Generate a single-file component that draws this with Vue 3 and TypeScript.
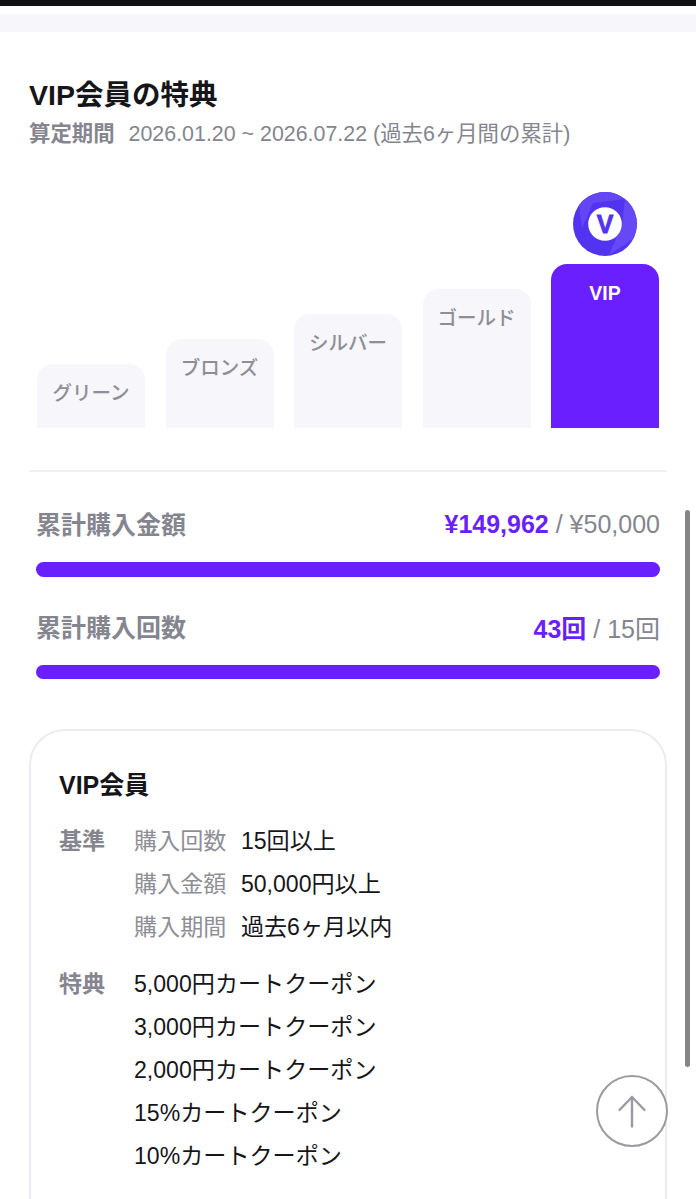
<script setup lang="ts">
/** VIP benefits screen: grade steps, progress bars, and the criteria card. */
const grades = [
  { name: 'グリーン', height: 64 },
  { name: 'ブロンズ', height: 89 },
  { name: 'シルバー', height: 114 },
  { name: 'ゴールド', height: 139 },
]

const progress = [
  { label: '累計購入金額', value: '¥149,962', goal: '¥50,000' },
  { label: '累計購入回数', value: '43回', goal: '15回' },
]

const criteria = [
  { key: '購入回数', value: '15回以上' },
  { key: '購入金額', value: '50,000円以上' },
  { key: '購入期間', value: '過去6ヶ月以内' },
]

const benefits = [
  '5,000円カートクーポン',
  '3,000円カートクーポン',
  '2,000円カートクーポン',
  '15%カートクーポン',
  '10%カートクーポン',
]
</script>

<template>
  <div class="page">
    <div class="status-edge" />
    <div class="band" />

    <section class="head">
      <h1 class="title">VIP会員の特典</h1>
      <p class="period">
        <b>算定期間</b>
        <span>2026.01.20 ~ 2026.07.22 (過去6ヶ月間の累計)</span>
      </p>
    </section>

    <div class="steps">
      <div v-for="g in grades" :key="g.name" class="step" :style="{ height: g.height + 'px' }">
        {{ g.name }}
      </div>
      <div class="step-col">
        <svg class="badge" width="64" height="64" viewBox="0 0 64 64">
          <circle cx="32" cy="32" r="32" fill="#5234f0" />
          <path d="M6 13 A32 32 0 0 1 52 7 L20 11 L9 36 Z" fill="#6446f5" />
          <path d="M52 7 A32 32 0 0 1 60 47 L36 63 L49 33 Z" fill="#6748f6" />
          <circle cx="32" cy="32" r="16.800" fill="#fff" />
          <text x="32" y="41" text-anchor="middle" class="badge-v">V</text>
        </svg>
        <div class="step step-on">VIP</div>
      </div>
    </div>

    <div class="divider" />

    <section class="progress">
      <div v-for="p in progress" :key="p.label" class="meter">
        <div class="meter-row">
          <span class="meter-label">{{ p.label }}</span>
          <span class="meter-goal"><b>{{ p.value }}</b> / {{ p.goal }}</span>
        </div>
        <div class="track" />
      </div>
    </section>

    <section class="card">
      <h2 class="card-title">VIP会員</h2>
      <div class="info">
        <div class="info-head">基準</div>
        <div class="info-list">
          <div v-for="c in criteria" :key="c.key" class="line">
            <span class="line-key">{{ c.key }}</span>
            <span>{{ c.value }}</span>
          </div>
        </div>
      </div>
      <div class="info info-benefits">
        <div class="info-head">特典</div>
        <div class="info-list">
          <div v-for="b in benefits" :key="b" class="line">{{ b }}</div>
        </div>
      </div>
    </section>

    <!-- overlays -->
    <div class="scrollbar" />
    <button class="to-top" type="button" aria-label="top">
      <svg width="28" height="33" viewBox="0 0 28 33" fill="none" stroke="#9a9aa3" stroke-width="2.400" stroke-linecap="round" stroke-linejoin="round">
        <path d="M14 2 V31.500" />
        <path d="M1.500 15 L14 2 L26.500 15" />
      </svg>
    </button>
  </div>
</template>

<style>
html, body {
  margin: 0;
  background: #fff;
}
</style>

<style scoped>
.page {
  position: relative;
  height: 1199px;
  overflow: hidden;
  background: #fff;
  color: #16161a;
  font-family: "Liberation Sans", "Noto Sans CJK JP", sans-serif;
}
.status-edge {
  height: 6px;
  background: #111114;
}
.band {
  height: 18px;
  margin-top: 8px;
  background: #f6f6fb;
}
.head {
  padding: 46px 29px 0;
}
.title {
  margin: 0;
  font-size: 28.500px;
  line-height: 34px;
  font-weight: 700;
}
.period {
  margin: 7px 0 0;
  font-size: 21.400px;
  line-height: 30px;
  color: #85858f;
  display: flex;
  gap: 14px;
}
.period b {
  font-weight: 700;
}
.steps {
  display: flex;
  justify-content: space-between;
  align-items: flex-end;
  margin-top: 41px;
  padding: 0 37px;
  height: 238px;
}
.step {
  width: 108px;
  box-sizing: border-box;
  padding-top: 15px;
  border-radius: 16px 16px 0 0;
  background: #f6f6fb;
  color: #8e8e96;
  font-size: 19.500px;
  line-height: 28px;
  font-weight: 500;
  text-align: center;
}
.step-col {
  display: flex;
  flex-direction: column;
  align-items: center;
  gap: 8px;
}
.step-on {
  height: 164px;
  background: #6a1fff;
  color: #fff;
  font-weight: 700;
}
.badge {
  display: block;
}
.badge-v {
  font-size: 25px;
  font-weight: 700;
  fill: #5234f0;
  stroke: #5234f0;
  stroke-width: 0.800px;
}
.divider {
  height: 2px;
  margin: 42px 29px 0;
  background: #f0f0f3;
}
.progress {
  padding: 34px 36px 0;
}
.meter + .meter {
  margin-top: 32px;
}
.meter-row {
  display: flex;
  justify-content: space-between;
  align-items: center;
  height: 34px;
  color: #85858f;
}
.meter-label {
  font-size: 25px;
  font-weight: 700;
}
.meter-goal {
  padding-top: 2px;
  font-size: 25px;
}
.meter-goal b {
  color: #6a1fff;
}
.track {
  height: 14.500px;
  margin-top: 22px;
  border-radius: 8px;
  background: #6a1fff;
}
.card {
  height: 484px;
  margin: 50px 29px 0;
  padding: 38px 28px 0;
  border: 2px solid #ececf0;
  border-radius: 36px;
  background: #fff;
}
.card-title {
  margin: 0;
  font-size: 25px;
  line-height: 32px;
  font-weight: 700;
}
.info {
  display: flex;
  margin-top: 19px;
  font-size: 23.100px;
}
.info-benefits {
  margin-top: 14px;
}
.info-head {
  width: 75px;
  line-height: 43px;
  font-weight: 700;
  color: #85858f;
}
.line {
  display: flex;
  gap: 14.500px;
  line-height: 43px;
}
.line-key {
  color: #8e8e96;
}
.scrollbar {
  position: absolute;
  left: 685px;
  top: 510px;
  width: 5px;
  height: 557px;
  border-radius: 3px;
  background: #86868a;
}
.to-top {
  position: absolute;
  left: 596px;
  top: 1075px;
  width: 72px;
  height: 72px;
  padding: 0;
  display: flex;
  align-items: center;
  justify-content: center;
  border: 2px solid #9a9aa3;
  border-radius: 50%;
  background: rgba(255, 255, 255, 0.92);
}
</style>
